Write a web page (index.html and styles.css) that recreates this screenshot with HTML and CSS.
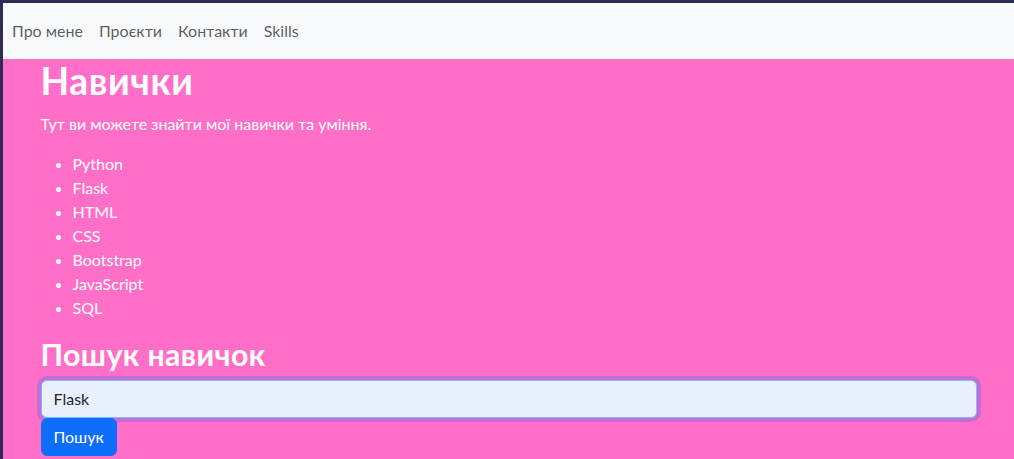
FILE: index.html
```html
<!DOCTYPE html>
<html lang="uk">
<head>
<meta charset="utf-8">
<title>Skills</title>
<link rel="stylesheet" href="styles.css">
</head>
<body>
<div class="frame">
  <nav class="navbar">
    <a class="nav-link" href="#">Про мене</a>
    <a class="nav-link" href="#">Проєкти</a>
    <a class="nav-link" href="#">Контакти</a>
    <a class="nav-link" href="#">Skills</a>
  </nav>
  <main class="page">
    <div class="container">
      <h1 class="title">Навички</h1>
      <p class="lead-text">Тут ви можете знайти мої навички та уміння.</p>
      <ul class="skills">
        <li>Python</li>
        <li>Flask</li>
        <li>HTML</li>
        <li>CSS</li>
        <li>Bootstrap</li>
        <li>JavaScript</li>
        <li>SQL</li>
      </ul>
      <h2 class="subtitle">Пошук навичок</h2>
      <form class="search">
        <input class="form-control" type="text" value="Flask">
        <button class="btn" type="button">Пошук</button>
      </form>
    </div>
  </main>
</div>
</body>
</html>
```
FILE: styles.css
```css
* { box-sizing: border-box; }
html, body { margin: 0; padding: 0; height: 100%; overflow: hidden; }
body {
  background: #2b2d55;
  font-family: Lato, "Noto Sans", sans-serif;
  font-size: 16px;
  line-height: 1.5;
  color: #fff;
}
.frame {
  margin: 3px 0 0 3px;
  height: calc(100% - 3px);
  background: #ff6ec7;
  display: flex;
  flex-direction: column;
}
.navbar {
  background: #f8f9fa;
  height: 56px;
  display: flex;
  align-items: center;
  padding: 0 8px 0 9px;
}
.nav-link {
  color: rgba(0,0,0,.65);
  text-decoration: none;
  padding: 8px 8px 8px 0;
  margin-right: 8px;
}
.nav-link.tight { letter-spacing: -0.3px; }
.page { flex: 1; }
.container {
  width: 960px;
  margin: 0 auto;
  padding: 0 12px;
}
.title {
  margin: 0 0 8px;
  font-size: 37.2px;
  font-weight: 700;
  line-height: 1.2;
  letter-spacing: 0.6px;
}
.lead-text { margin: 0 0 16px; }
.skills {
  margin: 0 0 16px;
  padding-left: 32px;
}
.subtitle {
  margin: 0 0 8px;
  font-size: 30.3px;
  font-weight: 700;
  line-height: 1.2;
  letter-spacing: 0.4px;
}
.search { margin: 0; }
.form-control {
  display: block;
  width: 100%;
  height: 38px;
  padding: 6px 12px;
  font: inherit;
  color: #212529;
  background: #e8f0fe;
  border: 1px solid #86b7fe;
  border-radius: 6px;
  outline: none;
  box-shadow: 0 0 0 4px rgba(13,110,253,.25);
}
.btn {
  display: block;
  height: 38px;
  padding: 6px 12px;
  font: inherit;
  color: #fff;
  background: #0d6efd;
  border: 1px solid #0d6efd;
  border-radius: 6px;
}
```
